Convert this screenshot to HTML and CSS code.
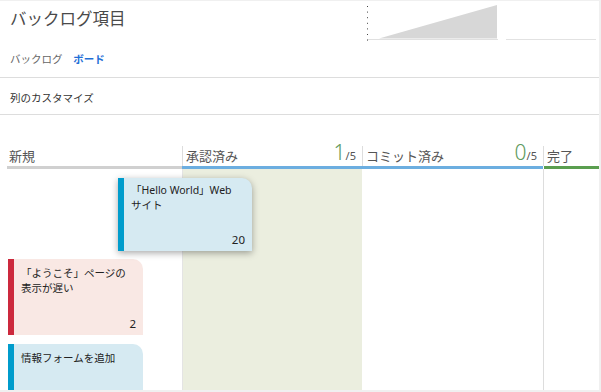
FILE: index.html
```html
<!DOCTYPE html>
<html lang="ja">
<head>
    <meta charset="UTF-8">
    <meta name="viewport" content="width=device-width, initial-scale=1.0">
    <title>バックログ項目</title>
    <link rel="stylesheet" href="styles.css">
</head>
<body>
    <div class="page">
        <header class="top">
            <h1 class="title">バックログ項目</h1>
            <svg class="burndown" width="133" height="36" viewBox="0 0 133 36">
                <polygon points="13,33.5 131,0 131,33.5" fill="#d7d7d7"/>
                <line x1="1" y1="34.5" x2="132" y2="34.5" stroke="#e0e0e0" stroke-width="1"/>
                <line x1="1.5" y1="1" x2="1.5" y2="36" stroke="#444" stroke-width="1" stroke-dasharray="1 4.6"/>
            </svg>
            <div class="spark"></div>
        </header>

        <nav class="tabs">
            <span class="tab">バックログ</span>
            <span class="tab active">ボード</span>
        </nav>

        <div class="toolbar">列のカスタマイズ</div>

        <div class="board">
            <div class="column">
                <div class="col-head first"><span class="col-name">新規</span></div>
                <div class="col-bar"></div>
                <div class="col-body new">
                    <div class="card bug">
                        <p>「ようこそ」ページの表示が遅い</p>
                        <span class="card-est">2</span>
                    </div>
                    <div class="card story">
                        <p>情報フォームを追加</p>
                    </div>
                </div>
            </div>
            <div class="column">
                <div class="col-head"><span class="col-name">承認済み</span><span class="count"><b>1</b>/5</span></div>
                <div class="col-bar active"></div>
                <div class="col-body target"></div>
            </div>
            <div class="column">
                <div class="col-head"><span class="col-name">コミット済み</span><span class="count"><b>0</b>/5</span></div>
                <div class="col-bar active"></div>
                <div class="col-body"></div>
            </div>
            <div class="column">
                <div class="col-head"><span class="col-name">完了</span></div>
                <div class="col-bar done"></div>
                <div class="col-body closed"></div>
            </div>

            <div class="card story dragging">
                <p>「Hello World」Web <span class="word">サイト</span></p>
                <span class="card-est">20</span>
            </div>
        </div>
    </div>
</body>
</html>
```

FILE: styles.css
```css
body {
    margin: 0;
    background-color: #f0f0f0;
    font-family: "Noto Sans", "Noto Sans CJK JP", sans-serif;
    color: #333;
}
.page {
    margin-top: 1px;
    width: 599px;
    height: 389px;
    background-color: #fff;
    overflow: hidden;
}
.top {
    display: flex;
    height: 42px;
}
.title {
    width: 356px;
    margin: 0;
    padding: 7px 0 0 10px;
    font-size: 16.5px;
    line-height: 22px;
    font-weight: 400;
    color: #4a4a4a;
}
.burndown {
    display: block;
    margin-top: 4px;
}
.spark {
    width: 90px;
    height: 38px;
    margin-left: 7px;
    border-bottom: 1px solid #e2e2e2;
}
.tabs {
    height: 34px;
    line-height: 32px;
    padding-left: 10px;
    border-bottom: 1px solid #ddd;
    font-size: 10.5px;
}
.tab {
    color: #666;
    margin-right: 8px;
}
.tab.active {
    color: #1f6fd6;
    font-weight: bold;
}
.toolbar {
    height: 34px;
    padding: 2px 0 0 10px;
    line-height: 36px;
    border-bottom: 1px solid #ddd;
    font-size: 10.5px;
    color: #333;
}
.board {
    position: relative;
    display: grid;
    grid-template-columns: 175px 180px 181px 56px;
    height: 275px;
    box-sizing: border-box;
    padding: 31px 0 0 7px;
}
.column {
    display: flex;
    flex-direction: column;
}
.col-head {
    display: flex;
    align-items: flex-end;
    height: 20px;
    box-sizing: border-box;
    padding: 0 6px 2px 3px;
    border-left: 1px solid #ddd;
}
.col-head.first {
    border-left: none;
    padding-left: 2px;
}
.col-name {
    font-size: 13px;
    line-height: 16px;
    color: #555;
    white-space: nowrap;
}
.count {
    margin-left: auto;
    font-size: 11px;
    line-height: 16px;
    color: #555;
}
.count b {
    font-size: 21px;
    font-weight: 300;
    color: #5e9a5e;
}
.col-bar {
    height: 3px;
    background-color: #d0d0d0;
}
.col-bar.active {
    background-color: #6caee0;
}
.col-bar.done {
    margin-left: 1px;
    background-color: #5a9e4f;
}
.col-body {
    flex: 1;
}
.col-body.new {
    padding: 90px 0 0 1px;
}
.col-body.target {
    background-color: #ebeedf;
    border-left: 1px solid #e4e4e4;
}
.col-body.closed {
    border-left: 1px solid #ddd;
}
.card {
    position: relative;
    width: 135px;
    height: 76px;
    box-sizing: border-box;
    margin-bottom: 9px;
    padding: 7px 7px 0 7px;
    border-left: 6px solid;
    border-top-right-radius: 10px;
    font-size: 10.5px;
    line-height: 15px;
    color: #222;
}
.card p {
    margin: 0;
}
.card .word {
    white-space: nowrap;
}
.card.story {
    background-color: #d6eaf2;
    border-left-color: #009ccc;
}
.card.bug {
    background-color: #f9e8e4;
    border-left-color: #cc293d;
}
.card-est {
    position: absolute;
    right: 7px;
    bottom: 4px;
    font-size: 11.5px;
    line-height: 15px;
}
.card.dragging {
    position: absolute;
    left: 118px;
    top: 63px;
    width: 134px;
    height: 73px;
    margin: 0;
    padding-top: 5px;
    box-shadow: 0 2px 7px rgba(0, 0, 0, 0.35);
}
```
